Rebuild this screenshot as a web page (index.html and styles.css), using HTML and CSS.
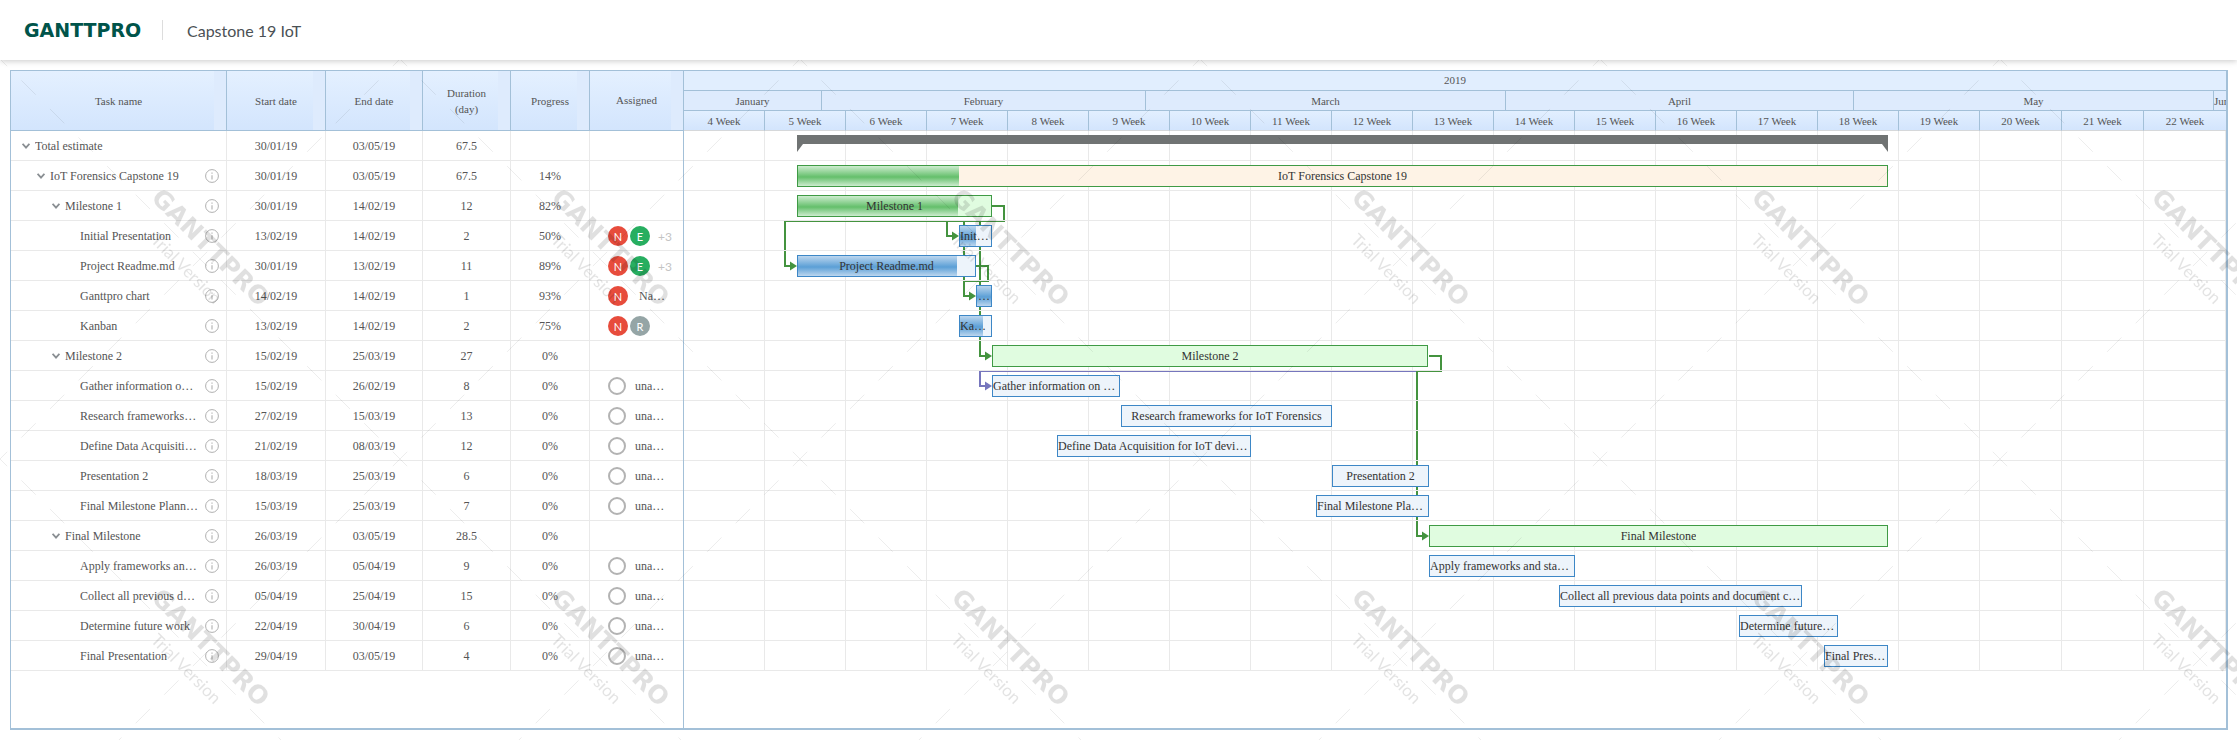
FILE: index.html
```html
<!DOCTYPE html>
<html lang="en">
<head>
<meta charset="utf-8">
<title>Capstone 19 IoT</title>
<link rel="stylesheet" href="styles.css">
</head>
<body>
<svg class="symbols" width="0" height="0" aria-hidden="true">
  <symbol id="chev" viewBox="0 0 8 6"><path d="M0.6 0.8 4 4.6 7.4 0.8" fill="none" stroke="#8a8f93" stroke-width="1.8"/></symbol>
  <symbol id="info" viewBox="0 0 14 14"><circle cx="7" cy="7" r="6.4" fill="none" stroke="#b0b0b0" stroke-width="1"/><path d="M7 6.2v4.2M7 3.6v1.2" fill="none" stroke="#b0b0b0" stroke-width="1.1"/></symbol>
</svg>
<header class="topbar">
  <div class="logo">GANTTPRO</div>
  <div class="topbar-sep"></div>
  <div class="project-title">Capstone 19 IoT</div>
</header>
<main class="gantt">
  <section class="table-pane">
    <div class="thead">
      <div class="th">Task name</div>
      <div class="th">Start date</div>
      <div class="th">End date</div>
      <div class="th th-two">Duration<br>(day)</div>
      <div class="th">Progress</div>
      <div class="th th-last">Assigned</div>
    </div>
    <div class="tr"><div class="td name lv0"><svg class="chev"><use href="#chev"/></svg><span class="label">Total estimate</span></div><div class="td">30/01/19</div><div class="td">03/05/19</div><div class="td">67.5</div><div class="td"></div><div class="td who"></div></div>
    <div class="tr"><div class="td name lv1"><svg class="chev"><use href="#chev"/></svg><span class="label">IoT Forensics Capstone 19</span><svg class="info"><use href="#info"/></svg></div><div class="td">30/01/19</div><div class="td">03/05/19</div><div class="td">67.5</div><div class="td">14%</div><div class="td who"></div></div>
    <div class="tr"><div class="td name lv2"><svg class="chev"><use href="#chev"/></svg><span class="label">Milestone 1</span><svg class="info"><use href="#info"/></svg></div><div class="td">30/01/19</div><div class="td">14/02/19</div><div class="td">12</div><div class="td">82%</div><div class="td who"></div></div>
    <div class="tr"><div class="td name lv3"><span class="label">Initial Presentation</span><svg class="info"><use href="#info"/></svg></div><div class="td">13/02/19</div><div class="td">14/02/19</div><div class="td">2</div><div class="td">50%</div><div class="td who"><span class="av red">N</span><span class="av green">E</span><span class="more">+3</span></div></div>
    <div class="tr"><div class="td name lv3"><span class="label">Project Readme.md</span><svg class="info"><use href="#info"/></svg></div><div class="td">30/01/19</div><div class="td">13/02/19</div><div class="td">11</div><div class="td">89%</div><div class="td who"><span class="av red">N</span><span class="av green">E</span><span class="more">+3</span></div></div>
    <div class="tr"><div class="td name lv3"><span class="label">Ganttpro chart</span><svg class="info"><use href="#info"/></svg></div><div class="td">14/02/19</div><div class="td">14/02/19</div><div class="td">1</div><div class="td">93%</div><div class="td who"><span class="av red">N</span><span class="who-name">Na…</span></div></div>
    <div class="tr"><div class="td name lv3"><span class="label">Kanban</span><svg class="info"><use href="#info"/></svg></div><div class="td">13/02/19</div><div class="td">14/02/19</div><div class="td">2</div><div class="td">75%</div><div class="td who"><span class="av red">N</span><span class="av grey">R</span></div></div>
    <div class="tr"><div class="td name lv2"><svg class="chev"><use href="#chev"/></svg><span class="label">Milestone 2</span><svg class="info"><use href="#info"/></svg></div><div class="td">15/02/19</div><div class="td">25/03/19</div><div class="td">27</div><div class="td">0%</div><div class="td who"></div></div>
    <div class="tr"><div class="td name lv3"><span class="label">Gather information on IoT Forensics</span><svg class="info"><use href="#info"/></svg></div><div class="td">15/02/19</div><div class="td">26/02/19</div><div class="td">8</div><div class="td">0%</div><div class="td who"><span class="ring"></span><span class="una">una…</span></div></div>
    <div class="tr"><div class="td name lv3"><span class="label">Research frameworks for IoT Forensics</span><svg class="info"><use href="#info"/></svg></div><div class="td">27/02/19</div><div class="td">15/03/19</div><div class="td">13</div><div class="td">0%</div><div class="td who"><span class="ring"></span><span class="una">una…</span></div></div>
    <div class="tr"><div class="td name lv3"><span class="label">Define Data Acquisition for IoT devices</span><svg class="info"><use href="#info"/></svg></div><div class="td">21/02/19</div><div class="td">08/03/19</div><div class="td">12</div><div class="td">0%</div><div class="td who"><span class="ring"></span><span class="una">una…</span></div></div>
    <div class="tr"><div class="td name lv3"><span class="label">Presentation 2</span><svg class="info"><use href="#info"/></svg></div><div class="td">18/03/19</div><div class="td">25/03/19</div><div class="td">6</div><div class="td">0%</div><div class="td who"><span class="ring"></span><span class="una">una…</span></div></div>
    <div class="tr"><div class="td name lv3"><span class="label">Final Milestone Planning</span><svg class="info"><use href="#info"/></svg></div><div class="td">15/03/19</div><div class="td">25/03/19</div><div class="td">7</div><div class="td">0%</div><div class="td who"><span class="ring"></span><span class="una">una…</span></div></div>
    <div class="tr"><div class="td name lv2"><svg class="chev"><use href="#chev"/></svg><span class="label">Final Milestone</span><svg class="info"><use href="#info"/></svg></div><div class="td">26/03/19</div><div class="td">03/05/19</div><div class="td">28.5</div><div class="td">0%</div><div class="td who"></div></div>
    <div class="tr"><div class="td name lv3"><span class="label">Apply frameworks and standards</span><svg class="info"><use href="#info"/></svg></div><div class="td">26/03/19</div><div class="td">05/04/19</div><div class="td">9</div><div class="td">0%</div><div class="td who"><span class="ring"></span><span class="una">una…</span></div></div>
    <div class="tr"><div class="td name lv3"><span class="label">Collect all previous data points and document conclusions</span><svg class="info"><use href="#info"/></svg></div><div class="td">05/04/19</div><div class="td">25/04/19</div><div class="td">15</div><div class="td">0%</div><div class="td who"><span class="ring"></span><span class="una">una…</span></div></div>
    <div class="tr"><div class="td name lv3"><span class="label">Determine future work</span><svg class="info"><use href="#info"/></svg></div><div class="td">22/04/19</div><div class="td">30/04/19</div><div class="td">6</div><div class="td">0%</div><div class="td who"><span class="ring"></span><span class="una">una…</span></div></div>
    <div class="tr"><div class="td name lv3"><span class="label">Final Presentation</span><svg class="info"><use href="#info"/></svg></div><div class="td">29/04/19</div><div class="td">03/05/19</div><div class="td">4</div><div class="td">0%</div><div class="td who"><span class="ring"></span><span class="una">una…</span></div></div>
  </section>
  <section class="chart-pane">
    <div class="scale-year">2019</div>
    <div class="scale-months">
      <div class="month">January</div>
      <div class="month">February</div>
      <div class="month">March</div>
      <div class="month">April</div>
      <div class="month">May</div>
      <div class="month month-last">Jun</div>
    </div>
    <div class="scale-weeks">
      <div class="week">4 Week</div><div class="week">5 Week</div><div class="week">6 Week</div><div class="week">7 Week</div><div class="week">8 Week</div><div class="week">9 Week</div><div class="week">10 Week</div><div class="week">11 Week</div><div class="week">12 Week</div><div class="week">13 Week</div><div class="week">14 Week</div><div class="week">15 Week</div><div class="week">16 Week</div><div class="week">17 Week</div><div class="week">18 Week</div><div class="week">19 Week</div><div class="week">20 Week</div><div class="week">21 Week</div><div class="week week-last">22 Week</div>
    </div>
    <div class="chart-body">
      <div class="grid-cols">
        <i></i><i></i><i></i><i></i><i></i><i></i><i></i><i></i><i></i><i></i><i></i><i></i><i></i><i></i><i></i><i></i><i></i><i></i><i></i>
      </div>
      <svg class="links" width="1542" height="540" aria-hidden="true">
        <g transform="translate(-684 -131)" fill="none" stroke-width="2">
          <path stroke="#7676bd" d="M1417 371H980V386H987"/>
          <polygon fill="#7676bd" points="985,381.5 992,386 985,390.5"/>
          <g stroke="#44933f">
            <path d="M992 206H1004V221H785V266H792"/>
            <path d="M947 221V236H954"/>
            <path d="M964 221V296H971"/>
            <path d="M980 221V356H987"/>
            <path d="M976 266H988V281H964"/>
            <path d="M1429 356H1441V371H1417V536H1424"/>
          </g>
          <g fill="#44933f">
            <polygon points="790,261.5 797,266 790,270.5"/>
            <polygon points="952,231.5 959,236 952,240.5"/>
            <polygon points="969,291.5 976,296 969,300.5"/>
            <polygon points="985,351.5 992,356 985,360.5"/>
            <polygon points="1422,531.5 1429,536 1422,540.5"/>
          </g>
        </g>
      </svg>
      <div class="lane"><div class="summary" style="left:113px;width:1091px"></div></div>
      <div class="lane"><div class="bar root" style="left:113px;width:1091px"><div class="fill" style="width:161px"></div><span class="bar-text">IoT Forensics Capstone 19</span></div></div>
      <div class="lane"><div class="bar mile" style="left:113px;width:195px"><div class="fill" style="width:160px"></div><span class="bar-text">Milestone 1</span></div></div>
      <div class="lane"><div class="bar task" style="left:275px;width:33px"><div class="fill" style="width:16px"></div><span class="bar-text">Initial Presentation</span></div></div>
      <div class="lane"><div class="bar task" style="left:113px;width:179px"><div class="fill" style="width:159px"></div><span class="bar-text">Project Readme.md</span></div></div>
      <div class="lane"><div class="bar task" style="left:292px;width:16px"><div class="fill" style="width:14px"></div><span class="bar-text">…</span></div></div>
      <div class="lane"><div class="bar task" style="left:275px;width:33px"><div class="fill" style="width:23px"></div><span class="bar-text">Kanban</span></div></div>
      <div class="lane"><div class="bar mile" style="left:308px;width:436px"><span class="bar-text">Milestone 2</span></div></div>
      <div class="lane"><div class="bar task" style="left:308px;width:128px"><span class="bar-text">Gather information on IoT Forensics</span></div></div>
      <div class="lane"><div class="bar task" style="left:437px;width:211px"><span class="bar-text">Research frameworks for IoT Forensics</span></div></div>
      <div class="lane"><div class="bar task" style="left:373px;width:194px"><span class="bar-text">Define Data Acquisition for IoT devices</span></div></div>
      <div class="lane"><div class="bar task" style="left:648px;width:97px"><span class="bar-text">Presentation 2</span></div></div>
      <div class="lane"><div class="bar task" style="left:632px;width:113px"><span class="bar-text">Final Milestone Planning</span></div></div>
      <div class="lane"><div class="bar mile" style="left:745px;width:459px"><span class="bar-text">Final Milestone</span></div></div>
      <div class="lane"><div class="bar task" style="left:745px;width:146px"><span class="bar-text">Apply frameworks and standards</span></div></div>
      <div class="lane"><div class="bar task" style="left:875px;width:243px"><span class="bar-text">Collect all previous data points and document conclusions</span></div></div>
      <div class="lane"><div class="bar task" style="left:1055px;width:99px"><span class="bar-text">Determine future work</span></div></div>
      <div class="lane"><div class="bar task" style="left:1140px;width:64px"><span class="bar-text">Final Presentation</span></div></div>
    </div>
  </section>
</main>
<svg class="watermark" width="2237" height="740" aria-hidden="true">
  <defs>
    <pattern id="wm" width="400" height="400" patternUnits="userSpaceOnUse">
      <g class="wm-lines">
        <line x1="200" y1="-141" x2="0" y2="59"/>
        <line x1="200" y1="-141" x2="400" y2="59"/>
        <line x1="0" y1="59" x2="200" y2="259"/>
        <line x1="400" y1="59" x2="200" y2="259"/>
        <line x1="200" y1="259" x2="0" y2="459"/>
        <line x1="200" y1="259" x2="400" y2="459"/>
      </g>
      <text class="wm-brand" transform="translate(150 199) rotate(45)">GANTTPRO</text>
      <text class="wm-trial" transform="translate(150 241) rotate(45)">Trial Version</text>
    </pattern>
  </defs>
  <rect width="2237" height="740" fill="url(#wm)"/>
</svg>
</body>
</html>
```
FILE: styles.css
```css
* { box-sizing: border-box; }
html, body { margin: 0; padding: 0; }
body {
  width: 2237px;
  height: 740px;
  overflow: hidden;
  position: relative;
  background: #fff;
  font-family: "Liberation Serif", serif;
  font-size: 12px;
  color: #555;
}
.symbols { position: absolute; }

/* top bar */
.topbar {
  position: relative;
  z-index: 10;
  height: 60px;
  background: #fff;
  box-shadow: 0 1px 6px rgba(0, 0, 0, .22);
  display: flex;
  align-items: center;
  padding-left: 24px;
}
.logo {
  width: 115px;
  font-family: "DejaVu Sans", sans-serif;
  font-weight: 700;
  font-size: 19px;
  line-height: 20px;
  color: #00544a;
  white-space: nowrap;
}
.topbar-sep { width: 1px; height: 20px; background: #ddd; margin: 0 24px 0 23px; }
.project-title { font-family: Lato, sans-serif; font-size: 16px; color: #4b5155; }

/* frame */
.gantt {
  display: flex;
  width: 2218px;
  height: 660px;
  margin: 10px 0 0 10px;
  border-style: solid;
  border-color: #a3c0d8;
  border-width: 1px 2px 2px 1px;
}
.table-pane { width: 673px; flex: none; border-right: 1px solid #a3c0d8; }
.chart-pane { flex: 1; min-width: 0; }

/* table */
.thead, .tr {
  display: grid;
  grid-template-columns: 216px 99px 97px 88px 79px 93px;
}
.thead { width: 672px; height: 60px; border-bottom: 1px solid #a3c0d8; }
.th {
  display: flex;
  align-items: center;
  justify-content: center;
  text-align: center;
  font-size: 11px;
  line-height: 16px;
  border-right: 1px solid #a3c0d8;
  background:
    linear-gradient(#deebfd, #deebfd) right top / 12px 100% no-repeat,
    linear-gradient(#e4f0ff, #d3e5fd);
}
.th-last { border-right: 0; padding-bottom: 2px; }
.tr { width: 672px; height: 30px; border-bottom: 1px solid #e9e9e9; }
.td {
  display: flex;
  align-items: center;
  justify-content: center;
  min-width: 0;
  padding-top: 1px;
  border-right: 1px solid #e9e9e9;
  white-space: nowrap;
}
.td.who { border-right: 0; justify-content: flex-start; padding-left: 18px; }
.td.name { justify-content: flex-start; padding-right: 7px; }
.lv0 { padding-left: 11px; }
.lv1 { padding-left: 26px; }
.lv2 { padding-left: 41px; }
.lv3 { padding-left: 69px; }
.chev { width: 8px; height: 6px; margin-right: 5px; flex: none; }
.label { flex: 1; min-width: 0; overflow: hidden; text-overflow: ellipsis; }
.info { width: 14px; height: 14px; margin-left: 7px; flex: none; }

.av {
  width: 20px;
  height: 20px;
  margin-right: 2px;
  border-radius: 50%;
  display: flex;
  align-items: center;
  justify-content: center;
  color: #fff;
  font-family: Lato, sans-serif;
  font-size: 11px;
  flex: none;
}
.red { background: #e74c3c; }
.green { background: #27ae60; }
.grey { background: #95a5a6; }
.more { margin-left: 6px; font-family: Lato, sans-serif; font-size: 12px; color: #c4c4c4; }
.who-name { margin-left: 9px; }
.ring {
  width: 18px;
  height: 18px;
  border: 2px solid #b3b3b3;
  border-radius: 50%;
  flex: none;
}
.una { margin-left: 9px; }

/* time scale */
.scale-year, .month, .week {
  display: flex;
  align-items: center;
  justify-content: center;
  font-size: 11px;
  height: 20px;
  overflow: hidden;
  white-space: nowrap;
}
.scale-year { background: #e1eefe; border-bottom: 1px solid #a3c0d8; padding-bottom: 2px; }
.scale-months {
  display: grid;
  grid-template-columns: 138px 324px 360px 348px 360px 12px;
  background: #deebfd;
}
.month { border-bottom: 1px solid #a3c0d8; border-right: 1px solid #a3c0d8; }
.month-last { border-right: 0; justify-content: flex-start; }
.scale-weeks {
  display: grid;
  grid-template-columns: repeat(16, 81px) repeat(3, 82px);
  height: 20px;
}
.week {
  border-right: 1px solid #a3c0d8;
  border-bottom: 1px solid #d6d8da;
  background: linear-gradient(#e2efff, #d3e5fd);
}
.week-last { border-right: 0; }

/* chart */
.chart-body { position: relative; }
.grid-cols {
  position: absolute;
  left: 0;
  top: 0;
  width: 100%;
  height: 540px;
  display: grid;
  grid-template-columns: repeat(16, 81px) repeat(3, 82px);
}
.grid-cols i { border-right: 1px solid #e9e9e9; }
.links { position: absolute; left: 0; top: 0; overflow: visible; }
.lane {
  position: relative;
  height: 30px;
  border-bottom: 1px solid #e9e9e9;
}
.summary {
  position: absolute;
  top: 4px;
  height: 9px;
  background: #707373;
}
.summary::before, .summary::after {
  content: "";
  position: absolute;
  top: 9px;
  border-top: 8px solid #707373;
}
.summary::before { left: 0; border-right: 6px solid transparent; }
.summary::after { right: 0; border-left: 6px solid transparent; }

.bar {
  position: absolute;
  top: 4px;
  height: 22px;
  border: 1px solid;
  overflow: hidden;
  display: flex;
  align-items: center;
  justify-content: center;
  color: #333;
}
.fill { position: absolute; left: 0; top: 0; bottom: 0; }
.bar-text {
  position: relative;
  min-width: 0;
  overflow: hidden;
  text-overflow: ellipsis;
  white-space: nowrap;
}
.root { background: #fef3e6; border-color: #3f9a45; }
.root .fill, .mile .fill { background: linear-gradient(#cdeccf, #64bf6b 55%, #cdeccf); }
.mile { background: #e0fce0; border-color: #3f9a45; }
.task { background: #edf4fb; border-color: #3d87c6; }
.task .fill { background: linear-gradient(#bcd6ee, #5b9fd6 55%, #bcd6ee); }

/* watermark */
.watermark { position: absolute; left: 0; top: 0; z-index: 5; pointer-events: none; }
.wm-lines line {
  stroke: rgba(0, 0, 0, .07);
  stroke-width: 1;
  stroke-dasharray: 20.2 20.2;
  stroke-dashoffset: 10.1;
}
.wm-brand {
  font-family: "DejaVu Sans", sans-serif;
  font-weight: 700;
  font-size: 25px;
  fill: rgba(0, 0, 0, .12);
}
.wm-trial {
  font-family: Lato, sans-serif;
  font-size: 17px;
  fill: rgba(0, 0, 0, .11);
}
```
